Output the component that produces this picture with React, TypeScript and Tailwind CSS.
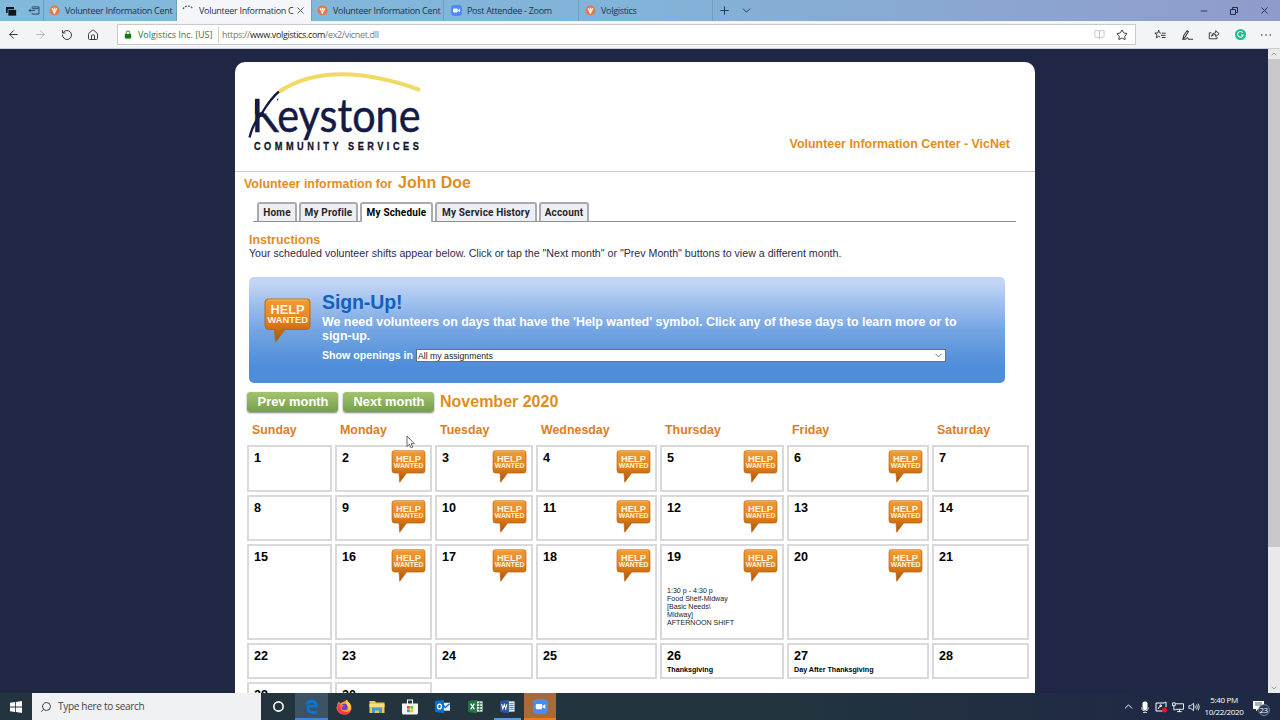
import type { ReactNode } from "react";
import {
  ArrowLeft,
  ArrowRight,
  BookOpen,
  ChevronDown,
  ChevronUp,
  House,
  Minus,
  Plus,
  RotateCw,
  Search,
  Star,
  X,
} from "lucide-react";

type Day = { day: number; help?: boolean; note?: string; shift?: string[] };

const WEEKDAYS = [
  "Sunday",
  "Monday",
  "Tuesday",
  "Wednesday",
  "Thursday",
  "Friday",
  "Saturday",
];

const DAYS: Day[] = Array.from({ length: 30 }, (_, i) => {
  const day = i + 1;
  const weekday = i % 7;
  return { day, help: day < 21 && weekday > 0 && weekday < 6 };
});
DAYS[18].shift = [
  "1:30 p - 4:30 p",
  "Food Shelf-Midway",
  "[Basic Needs\\",
  "Midway]",
  "AFTERNOON SHIFT",
];
DAYS[25].note = "Thanksgiving";
DAYS[26].note = "Day After Thanksgiving";

function VolgisticsIcon() {
  return (
    <svg viewBox="0 0 12 12" className="h-[11px] w-[11px] shrink-0">
      <circle cx="6" cy="6" r="5.5" fill="#e07a4a" />
      <path d="M3.4 3.6 5.9 8.6 8.5 3.6M6 3v2.6" fill="none" stroke="#fff0e6" strokeWidth="1.5" />
    </svg>
  );
}

function ZoomIcon({ className }: { className: string }) {
  return (
    <svg viewBox="0 0 16 16" className={className}>
      <rect width="16" height="16" rx="5" fill="#4a8cf5" />
      <rect x="3" y="5.2" width="6.8" height="5.6" rx="1.2" fill="#fff" />
      <path d="m10.3 7.3 2.8-1.8v5l-2.8-1.8z" fill="#fff" />
    </svg>
  );
}

function HelpWanted({ className }: { className: string }) {
  return (
    <svg viewBox="0 0 47 45" className={className}>
      <defs>
        <linearGradient id="help" x1="0" x2="0" y1="0" y2="1">
          <stop offset="0" stopColor="#ef9b35" />
          <stop offset="0.45" stopColor="#e8861f" />
          <stop offset="1" stopColor="#a95308" />
        </linearGradient>
      </defs>
      <path
        d="M4 1h39q3 0 3 3v24q0 3.500-3.500 3.500H21L11.500 44l-1-12.500H5q-4 0-4-4V4q0-3 3-3z"
        fill="url(#help)"
        stroke="#b8640f"
        strokeWidth="0.9"
      />
      <path d="M4 2.200h39" stroke="#f5b04e" strokeWidth="1.200" />
      <text x="6.500" y="16" textLength="34" lengthAdjust="spacingAndGlyphs" fontFamily="Liberation Sans" fontWeight="700" fontSize="13.500" fill="#fff3df">
        HELP
      </text>
      <text x="3.500" y="25.200" textLength="40.500" lengthAdjust="spacingAndGlyphs" fontFamily="Liberation Sans" fontWeight="700" fontSize="9.500" fill="#fff3df">
        WANTED
      </text>
    </svg>
  );
}

function BrowserTab({ icon, title, active, className }: { icon: ReactNode; title: string; active?: boolean; className: string }) {
  return (
    <div className={`flex h-full items-center border-r border-[#6fa0c0] pl-[5px] ${active ? "bg-[#f4f6f9]" : ""} ${className}`}>
      {icon}
      <span className="ml-[5px] flex-1 whitespace-nowrap text-[9px] tracking-[-0.3px] text-[#1f3347]">
        {title}
      </span>
      {active && <X className="mr-[5px] h-[11px] w-[11px] shrink-0 text-[#444]" strokeWidth={1.800} />}
    </div>
  );
}

function Browser() {
  return (
    <header className="shrink-0 font-['Open_Sans',sans-serif]">
      <div className="flex h-[21px] items-center bg-linear-to-r from-[#81b9dc] via-[#82b3d8] to-[#909bcb]">
        <div className="flex h-full w-[44px] items-center gap-[11px] border-r border-[#6fa0c0] pl-[5px]">
          <svg viewBox="0 0 12 12" className="h-[12px] w-[12px]">
            <path d="M1 2h8v6H1z" fill="#10161c" />
            <path d="M3 4.500h8.500V11H3z" fill="#10161c" stroke="#81b9dc" strokeWidth="0.700" />
          </svg>
          <svg viewBox="0 0 12 10" className="h-[9px] w-[12px]" fill="none" stroke="#25425a" strokeWidth="1">
            <path d="M4 2V1h7.500v8H4V8M4 3h7M0.500 5H7M2.500 3 .5 5l2 2" />
          </svg>
        </div>
        <BrowserTab icon={<VolgisticsIcon />} title="Volunteer Information Cent" className="w-[133px]" />
        <BrowserTab
          active
          icon={
            <svg viewBox="0 0 12 12" className="h-[12px] w-[12px] shrink-0" fill="none" stroke="#555" strokeWidth="1.200" strokeDasharray="2 1">
              <path d="M1 4a5.500 5.500 0 0 1 9.500-.5" />
            </svg>
          }
          title="Volunteer Information C"
          className="w-[135px]"
        />
        <BrowserTab icon={<VolgisticsIcon />} title="Volunteer Information Cent" className="w-[132px]" />
        <BrowserTab icon={<ZoomIcon className="h-[11px] w-[11px]" />} title="Post Attendee - Zoom" className="w-[135px] pl-[7px]" />
        <BrowserTab icon={<VolgisticsIcon />} title="Volgistics" className="w-[134px] pl-[6px]" />
        <div className="flex flex-1 items-center gap-[9px] pl-[5px] text-[#22384d]">
          <Plus className="h-[13px] w-[13px]" strokeWidth={1.800} />
          <ChevronDown className="h-[13px] w-[13px]" strokeWidth={1.800} />
        </div>
        <div className="flex items-center gap-[20px] pr-[10px] text-[#202b48]">
          <Minus className="h-[10px] w-[10px]" strokeWidth={2} />
          <svg viewBox="0 0 10 10" className="h-[10px] w-[10px]" fill="none" stroke="currentColor">
            <path d="M1.500 3.500h5v5h-5zM3.500 3.500v-2h5v5h-2" />
          </svg>
          <X className="h-[11px] w-[11px]" strokeWidth={2} />
        </div>
      </div>

      <div className="flex h-[28px] items-center border-b border-[#c9ccd4] bg-[#f3f4f6]">
        <div className="flex w-[117px] items-center gap-[14px] pl-[7px] text-[#333]">
          <ArrowLeft className="h-[13px] w-[13px]" strokeWidth={1.800} />
          <ArrowRight className="h-[13px] w-[13px] text-[#b5b7ba]" strokeWidth={1.800} />
          <RotateCw className="h-[12px] w-[12px] -scale-x-100" strokeWidth={1.900} />
          <House className="h-[12px] w-[12px]" strokeWidth={1.900} />
        </div>
        <div className="flex h-[21px] w-[1019px] items-center border border-[#c9cacd] bg-white text-[9px] whitespace-nowrap">
          <svg viewBox="0 0 8 10" className="ml-[6px] h-[9px] w-[8px]">
            <path d="M.5 4.500h7v5h-7z" fill="#107c10" />
            <path d="M2 5V3a2 2 0 0 1 4 0v2" fill="none" stroke="#107c10" />
          </svg>
          <span className="ml-[6px] w-[80px] tracking-[-0.050px] text-[#2c7d3a]">Volgistics Inc. [US]</span>
          <span className="h-[16px] border-l border-[#ccc] pl-[3px] leading-[16px] tracking-[-0.350px] text-[#777]">
            https://<span className="text-[#1d1d1d]">www.volgistics.com</span>/ex2/vicnet.dll
          </span>
          <div className="ml-auto flex items-center gap-[11px] pr-[7px]">
            <BookOpen className="h-[11px] w-[11px] text-[#b9bbbf]" strokeWidth={1.800} />
            <Star className="h-[12px] w-[12px] text-[#333]" strokeWidth={2} />
          </div>
        </div>
        <div className="flex flex-1 items-center justify-between pr-[8px] pl-[18px]">
          <svg viewBox="0 0 14 12" className="h-[11px] w-[12px]" fill="none" stroke="#333" strokeWidth="1.100">
            <path d="M8 4.500 6.500 4 5.500 1 4.300 4.300H1L3.500 6.500 2.700 10 5.500 8l1.500 1M9 4.500h4.500M8 7h5.500M9 9.500h4.500" />
          </svg>
          <svg viewBox="0 0 14 12" className="h-[12px] w-[13px]" fill="none" stroke="#333" strokeWidth="1.100">
            <path d="M2 10.500 3 6.500 6.500 1.500l1.500 1L4.500 8 2 10.500h3q2-3 3 0h5" />
          </svg>
          <svg viewBox="0 0 14 12" className="h-[11px] w-[12px]" fill="none" stroke="#333" strokeWidth="1.100">
            <path d="M4 4H1.500v7h9V9M4 8q.5-4 5-4V1.500L13 5 9 8.500V6Q6 6 4 8z" />
          </svg>
          <svg viewBox="0 0 12 12" className="h-[11px] w-[11px]">
            <circle cx="6" cy="6" r="6" fill="#15bf86" />
            <path d="M8.500 4a3.100 3.100 0 1 0 .5 2.500H6.500" fill="none" stroke="#fff" strokeWidth="1.200" />
          </svg>
          <svg viewBox="0 0 12 4" className="h-[4px] w-[12px]" fill="#333">
            <circle cx="1.800" cy="2" r=".8" />
            <circle cx="6" cy="2" r=".8" />
            <circle cx="10.200" cy="2" r=".8" />
          </svg>
        </div>
      </div>
    </header>
  );
}

function Logo() {
  return (
    <svg viewBox="0 0 180 90" className="h-[90px] w-[180px]">
      <path d="M33.500 29.500Q85-4 174 28" fill="none" stroke="#f0d964" strokeWidth="4" />
      <text
        x="5.500"
        y="69.500"
        textLength="169"
        lengthAdjust="spacingAndGlyphs"
        fontFamily="Lato"
        fontSize="46"
        fill="#141a44"
        stroke="#141a44"
        strokeWidth=".5"
      >
        Keystone
      </text>
      {/* the K's upper arm is one long stroke that runs past the stem */}
      <path d="M14 34h17v13L22 51.500h-8z" fill="#fff" />
      <path d="M33 29.500Q25 36 16 51 7 61 3.500 75.500" fill="none" stroke="#141a44" strokeWidth="2.300" />
      <path d="M11 37.500V52M14 52.500l4-1" stroke="#141a44" strokeWidth="4" />
      <text
        transform="translate(8 87.500) scale(.8 1)"
        textLength="206"
        fontFamily="Liberation Sans"
        fontWeight="700"
        fontSize="11.500"
        fill="#111427"
        stroke="#111427"
        strokeWidth=".3"
      >
        COMMUNITY SERVICES
      </text>
    </svg>
  );
}

function PageTab({ label, active, className }: { label: string; active?: boolean; className: string }) {
  return (
    <div
      className={`flex items-center justify-center rounded-t-[3px] border-2 border-b-0 border-[#a9abb0] text-[10px] font-bold tracking-[0.170px] whitespace-nowrap ${
        active ? "h-[20px] bg-white pb-px text-black" : "h-[19px] bg-[#edeff2] text-[#24262c]"
      } ${className}`}
    >
      {label}
    </div>
  );
}

function SignUp() {
  return (
    <section className="mt-[17px] ml-[14px] flex h-[106px] w-[756px] rounded-[5px] bg-linear-to-b from-[#c2d5f5] from-5% via-[#74a5e3] via-50% to-[#4d8dd9] to-85%">
      <HelpWanted className="mt-[21px] ml-[15px] h-[45px] w-[47px]" />
      <div className="ml-[11px] font-bold text-white">
        <h2 className="mt-[13px] text-[19.500px] leading-[24px] tracking-[-0.1px] text-[#1260c0]">Sign-Up!</h2>
        <p className="w-[660px] pt-px text-[12.430px] leading-[14px]">
          We need volunteers on days that have the 'Help wanted' symbol. Click any of these days to learn more or to
          <br />
          sign-up.
        </p>
        <div className="mt-[5px] flex items-center gap-[3px]">
          <span className="w-[91px] text-[10.650px] leading-[14px] whitespace-nowrap">Show openings in</span>
          <div className="flex h-[13px] w-[530px] items-center justify-between border border-[#62718a] bg-white pr-px pl-px text-[8.700px] leading-[10px] font-normal text-[#222]">
            <span className="pt-px">All my assignments</span>
            <ChevronDown className="h-[11px] w-[11px] text-[#555]" strokeWidth={1.800} />
          </div>
        </div>
      </div>
    </section>
  );
}

function MonthButton({ children }: { children: string }) {
  return (
    <button className="h-[20px] w-[91px] rounded-[3px] bg-linear-to-b from-[#a3c46e] to-[#74a047] pb-px pl-px text-[12.900px] leading-[18px] font-bold text-white shadow-[0_1px_2px_rgba(0,0,0,0.5)]">
      {children}
    </button>
  );
}

function Calendar() {
  return (
    <>
      <div className="mt-[9px] ml-[12px] flex h-[20px] items-center">
        <MonthButton>Prev month</MonthButton>
        <div className="w-[5px]" />
        <MonthButton>Next month</MonthButton>
        <h2 className="ml-[6px] text-[16px] font-bold text-[#e08e1b]">November 2020</h2>
      </div>
      <div className="mt-[10px] ml-[12px] grid w-[782px] grid-cols-[85px_97px_98px_121px_124px_142px_97px] grid-rows-[20px_47px_46px_96px_36px_36px] gap-[3px]">
        {WEEKDAYS.map((name) => (
          <div key={name} className="pl-[5px] text-[12.400px] leading-[16px] font-bold text-[#e07c24]">
            {name}
          </div>
        ))}
        {DAYS.map(({ day, help, note, shift }) => (
          <div key={day} className="flex justify-between border-2 border-[#d9d9db] bg-white pl-[5px]">
            <div className="whitespace-nowrap">
              <div className="pt-[4px] text-[12.600px] leading-[15px] font-bold text-black">{day}</div>
              {note && <div className="mt-[2px] text-[7.150px] leading-[9px] font-bold text-black">{note}</div>}
              {shift && (
                <div className="mt-[22px] text-[7.100px] leading-[8.100px] text-[#222]">
                  {shift.map((line) => (
                    <div key={line}>{line}</div>
                  ))}
                </div>
              )}
            </div>
            {help && <HelpWanted className="mt-[3px] mr-[4px] h-[33px] w-[35px] shrink-0" />}
          </div>
        ))}
      </div>
    </>
  );
}

function Taskbar() {
  return (
    <footer className="flex h-[27px] shrink-0 items-center bg-linear-to-r from-[#23343e] from-60% to-[#1f2944] to-90% font-['Open_Sans',sans-serif]">
      <div className="flex w-[32px] justify-center">
        <svg viewBox="0 0 12 12" className="h-[12px] w-[12px]" fill="#fff">
          <path d="M0 1.700 5.200 1v4.600H0zM6 .9 12 0v5.600H6zM0 6.400h5.200V11L0 10.300zM6 6.400h6V12l-6-.9z" />
        </svg>
      </div>
      <div className="flex h-full w-[229px] items-center bg-[#f0f1f2] pl-[8px] text-[10px] tracking-[-0.300px] text-[#444]">
        <Search className="mr-[6px] h-[12px] w-[12px] -scale-x-100" strokeWidth={2} />
        Type here to search
      </div>
      <div className="flex w-[34px] justify-center">
        <svg viewBox="0 0 12 12" className="h-[13px] w-[13px]">
          <circle cx="6" cy="6" r="4.300" fill="none" stroke="#fff" strokeWidth="1.500" />
        </svg>
      </div>
      <div className="flex h-full w-[33px] items-center justify-center border-b-2 border-[#3f86cc] bg-[#3d5263]">
        <svg viewBox="0 0 14 14" className="mt-px h-[15px] w-[15px]">
          <path
            d="M1 6.500Q2 .5 7.500.5 13 .7 13 8H5q.3 3.500 4 3.500 2 0 3.500-1v2.700q-2 .8-4.300.8Q2.500 13.600 2.500 8.500q0-3 3-4.500Q3 4 1 6.500zM5.200 5.700h4.300Q9.500 3.500 7.400 3.500 5.500 3.600 5.200 5.700z"
            fill="#0b74d4"
          />
        </svg>
      </div>
      <div className="flex w-[32px] justify-center">
        <svg viewBox="0 0 16 16" className="h-[16px] w-[16px]">
          <path d="M8 2.500 11 .8q0 1.700 2.500 3.500Q16 7 15.500 10 14 15.500 8 15.500T.5 9Q.4 5 3 2.500l1 2z" fill="#ff9a2b" />
          <path d="M1 6q-.5 9.500 7.500 9.500 5 0 6.700-5-2 3-5.700 2.500Q3.500 12 4.500 6L3 4z" fill="#f2385a" />
          <circle cx="8.500" cy="8" r="3.200" fill="#7a3bc7" />
          <path d="M3.500 5.500q3-.5 5 1.500-3 0-2.500 2.500z" fill="#ff7139" />
          <path d="M11 .8q-2 3 .5 5.700 1.500 2 1 5 3.500-3 1.500-7Q11.500 3 11 .8z" fill="#ffd53d" />
        </svg>
      </div>
      <div className="flex w-[33px] justify-center">
        <svg viewBox="0 0 16 14" className="h-[14px] w-[16px]">
          <path d="M.5 1h5.500l1 1.500h8.500V13H.5z" fill="#f6c64b" />
          <path d="M.5 4h15v3H.5z" fill="#fbdc81" />
          <path d="M3 13V7.500h10V13h-3v-2.500H6V13z" fill="#3d9bd8" />
        </svg>
      </div>
      <div className="flex w-[33px] justify-center">
        <svg viewBox="0 0 16 16" className="h-[16px] w-[16px]">
          <path d="M5.500 5V1h5v4" fill="none" stroke="#fff" strokeWidth="1.100" />
          <path d="M0 4.500h16V14q0 1.500-1.500 1.500h-13Q0 15.500 0 14z" fill="#f7f5ef" />
          <path d="M5 7h2.800v2.800H5z" fill="#e8502f" />
          <path d="M8.400 7h2.800v2.800H8.400z" fill="#7fb93c" />
          <path d="M5 10.400h2.800v2.800H5z" fill="#2b9be0" />
          <path d="M8.400 10.400h2.800v2.800H8.400z" fill="#f5b921" />
        </svg>
      </div>
      <div className="flex w-[33px] justify-center">
        <svg viewBox="0 0 16 16" className="h-[15px] w-[15px]">
          <path d="M8 4h8v8.500H8z" fill="#e9f3fb" />
          <path d="m8.500 6 2.500 3 4.500-4" fill="none" stroke="#0a70c4" strokeWidth="1.400" />
          <path d="M0 2.200 9.500.8v14.400L0 13.800z" fill="#0a70c4" />
          <ellipse cx="4.800" cy="8" rx="2.100" ry="2.600" fill="none" stroke="#fff" strokeWidth="1.400" />
        </svg>
      </div>
      <div className="flex w-[32px] justify-center">
        <svg viewBox="0 0 16 16" className="h-[15px] w-[15px]">
          <path d="M8 2.500h7.500v11H8z" fill="#e8f2ea" />
          <path d="M10 5h5M10 8h5M10 11h5M12.500 3v10" stroke="#217346" />
          <path d="M0 2.200 9.500.8v14.400L0 13.800z" fill="#217346" />
          <path d="m2.800 5 4 6M6.800 5l-4 6" stroke="#fff" strokeWidth="1.400" />
        </svg>
      </div>
      <div className="flex h-full w-[32px] items-center justify-center">
        <div className="flex h-full w-[27px] items-center justify-center border-b-2 border-[#5d9ad6] pt-px">
          <svg viewBox="0 0 16 16" className="h-[15px] w-[15px]">
            <path d="M8 2.500h7.500v11H8z" fill="#e9eef8" />
            <path d="M10 5h4.500M10 7h4.500M10 9h4.500M10 11h4.500" stroke="#2b579a" strokeWidth=".8" />
            <path d="M0 2.200 9.500.8v14.400L0 13.800z" fill="#2b579a" />
            <path d="m1.800 5.500 1.200 5 1.600-4.500 1.600 4.500 1.200-5" fill="none" stroke="#fff" strokeWidth="1.100" />
          </svg>
        </div>
      </div>
      <div className="ml-px flex h-full w-[32px] items-center justify-center border-b-2 border-[#ef7a1a] bg-[#a86a38] pt-[2px]">
        <ZoomIcon className="h-[15px] w-[15px]" />
      </div>
      <div className="ml-auto flex items-center text-white">
        <ChevronUp className="mr-[5px] h-[13px] w-[13px]" strokeWidth={1.800} />
        <svg viewBox="0 0 10 12" className="h-[12px] w-[10px]">
          <rect x="2.500" y=".5" width="5" height="8.500" rx="2" fill="#fff" />
          <path d="M1.500 6.500q0 3.500 3.500 3.500t3.500-3.500M3 11.500h4" fill="none" stroke="#ddd" strokeWidth=".9" />
        </svg>
        <svg viewBox="0 0 13 12" className="ml-[5px] h-[12px] w-[13px]" fill="none" stroke="#fff">
          <path d="M9 2H1v8h7M9 2l2-1v5M3 8q1-3 3-2.500M5 4h1.500v1.500H5z" />
          <circle cx="9.500" cy="9" r="2.500" fill="#e81123" stroke="none" />
        </svg>
        <svg viewBox="0 0 13 12" className="ml-[4px] h-[12px] w-[12px]" fill="none" stroke="#fff">
          <path d="M4 2.500h8.500v6H4M8 8.500v2.500M5.500 11h5M.5 1.500h3v3h-3zM2 4.500V9h2" />
        </svg>
        <svg viewBox="0 0 13 12" className="ml-[4px] h-[12px] w-[12px]" fill="none" stroke="#fff" strokeWidth=".9">
          <path d="M1 4.500h2L6 2v8L3 7.500H1zM7.500 4.500q1 1.500 0 3M9.200 3.300q2 2.700 0 5.400M11 2.300q2.500 3.700 0 7.400" />
        </svg>
        <div className="mb-px ml-[4px] w-[40px] text-center text-[8px] leading-[12px] tracking-[-0.350px] whitespace-nowrap">
          <div>5:40 PM</div>
          <div>10/22/2020</div>
        </div>
        <svg viewBox="0 0 18 18" className="mr-[10px] ml-[8px] h-[18px] w-[18px]">
          <path d="M1 3h11v8H6l-2 2.500V11H1z" fill="#fff" />
          <path d="M3 5h7M3 7h7" stroke="#28364c" strokeWidth=".8" />
          <circle cx="12" cy="12" r="5.500" fill="#2a3850" stroke="#9aa3b2" strokeWidth=".7" />
          <text x="7.600" y="15" fontSize="8" fontFamily="Open Sans" fill="#fff" textLength="8.500">
            23
          </text>
        </svg>
      </div>
    </footer>
  );
}

export default function App() {
  return (
    <div className="relative flex h-[720px] w-[1280px] flex-col overflow-hidden bg-[#202744]">
      <Browser />
      <div className="flex min-h-0 flex-1 overflow-hidden font-['Liberation_Sans',Arial,sans-serif]">
        <main className="mt-[13px] ml-[235px] h-[660px] w-[800px] shrink-0 rounded-t-[10px] bg-white">
          <div className="flex h-[110px] items-start justify-between border-b border-[#cfcfd2] pr-[25px] pl-[11px]">
            <Logo />
            <p className="mt-[74px] text-[12.430px] leading-[16px] font-bold text-[#e08e1b]">
              Volunteer Information Center - VicNet
            </p>
          </div>
          <div className="flex h-[22px] items-baseline pl-[9px] text-[#e08e1b]">
            <span className="w-[154px] text-[12.450px] font-bold whitespace-nowrap">Volunteer information for</span>
            <span className="text-[16px] leading-[22px] font-bold">John Doe</span>
          </div>
          <nav className="mt-[8px] ml-[18px] flex h-[20px] w-[763px] items-start gap-[2px] bg-[linear-gradient(#8f9196,#8f9196)] bg-[length:100%_1px] bg-bottom bg-no-repeat pl-[4px] font-['Roboto',sans-serif]">
            <PageTab label="Home" className="w-[40px]" />
            <PageTab label="My Profile" className="w-[59px]" />
            <PageTab label="My Schedule" active className="w-[73px]" />
            <PageTab label="My Service History" className="w-[102px]" />
            <PageTab label="Account" className="w-[50px]" />
          </nav>
          <div className="mt-[11px] ml-[14px]">
            <h2 className="text-[12.450px] leading-[14px] font-bold text-[#e08e1b]">Instructions</h2>
            <p className="text-[10.650px] leading-[13px] whitespace-nowrap text-[#2c2c4a]">
              Your scheduled volunteer shifts appear below. Click or tap the "Next month" or "Prev Month" buttons to
              view a different month.
            </p>
          </div>
          <SignUp />
          <Calendar />
        </main>
        <div className="ml-auto flex w-[12px] flex-col items-center justify-between bg-[#e9e9ea]">
          <ChevronUp className="my-px h-[8px] w-[8px] text-[#777]" />
          <div className="w-full flex-1">
            <div className="h-[488px] bg-[#c8c8ca]" />
          </div>
          <ChevronDown className="my-px h-[8px] w-[8px] text-[#777]" />
        </div>
      </div>
      <Taskbar />
      {/* mouse pointer */}
      <svg viewBox="0 0 9 14" className="absolute top-[435px] left-[406px] h-[14px] w-[9px]">
        <path d="M1 1v10.500l2.400-2.200 1.700 3.600 1.600-.7-1.600-3.500h3.200z" fill="#fff" stroke="#444" strokeWidth=".8" />
      </svg>
    </div>
  );
}
